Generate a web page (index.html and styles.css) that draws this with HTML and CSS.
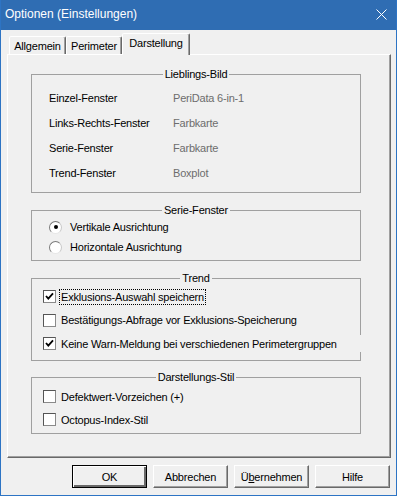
FILE: index.html
```html
<!DOCTYPE html>
<html lang="de">
<head>
<meta charset="utf-8">
<title>Optionen (Einstellungen)</title>
<link rel="stylesheet" href="styles.css">
</head>
<body>
<div class="window">
  <div class="titlebar">
    <span class="title">Optionen (Einstellungen)</span>
    <svg class="close" width="11" height="11" viewBox="0 0 11 11"><path d="M0.5 0.5 L10.5 10.5 M10.5 0.5 L0.5 10.5" stroke="#fff" stroke-width="1" fill="none"/></svg>
  </div>
  <div class="content">
    <div class="tabs">
      <div class="tab t1">Allgemein</div>
      <div class="tab t2">Perimeter</div>
      <div class="tab t3 active">Darstellung</div>
    </div>
    <div class="panel">
      <fieldset class="group g1">
        <legend>Lieblings-Bild</legend>
        <div class="fav">
          <span>Einzel-Fenster</span><span class="val">PeriData 6-in-1</span>
          <span>Links-Rechts-Fenster</span><span class="val">Farbkarte</span>
          <span>Serie-Fenster</span><span class="val">Farbkarte</span>
          <span>Trend-Fenster</span><span class="val">Boxplot</span>
        </div>
      </fieldset>
      <fieldset class="group g2">
        <legend>Serie-Fenster</legend>
        <div class="opts radios">
          <div class="row"><span class="rb on"></span><span class="lbl">Vertikale Ausrichtung</span></div>
          <div class="row"><span class="rb"></span><span class="lbl">Horizontale Ausrichtung</span></div>
        </div>
      </fieldset>
      <fieldset class="group g3">
        <legend>Trend</legend>
        <div class="opts checks trend">
          <div class="row"><span class="cb"><svg width="11" height="11" viewBox="0 0 11 11"><path d="M2 5 L4.3 7.6 L9 2.4" stroke="#000" stroke-width="1.8" fill="none"/></svg></span><span class="lbl focus">Exklusions-Auswahl speichern</span></div>
          <div class="row"><span class="cb"></span><span class="lbl">Bestätigungs-Abfrage vor Exklusions-Speicherung</span></div>
          <div class="row wide"><span class="cb"><svg width="11" height="11" viewBox="0 0 11 11"><path d="M2 5 L4.3 7.6 L9 2.4" stroke="#000" stroke-width="1.8" fill="none"/></svg></span><span class="lbl">Keine Warn-Meldung bei verschiedenen Perimetergruppen</span></div>
        </div>
      </fieldset>
      <fieldset class="group g4">
        <legend>Darstellungs-Stil</legend>
        <div class="opts checks style">
          <div class="row"><span class="cb"></span><span class="lbl">Defektwert-Vorzeichen (+)</span></div>
          <div class="row"><span class="cb"></span><span class="lbl">Octopus-Index-Stil</span></div>
        </div>
      </fieldset>
    </div>
    <div class="buttons">
      <button class="btn default">OK</button>
      <button class="btn">Abbrechen</button>
      <button class="btn">Ü<u>b</u>ernehmen</button>
      <button class="btn">Hilfe</button>
    </div>
  </div>
</div>
</body>
</html>
```
FILE: styles.css
```css
html, body {
  margin: 0;
  padding: 0;
  background: #f0f0f0;
}
body {
  font-family: "Liberation Sans", Arial, sans-serif;
  font-size: 11px;
  letter-spacing: -0.2px;
  color: #000;
}
.window {
  width: 397px;
  height: 496px;
  box-sizing: border-box;
  background: #f0f0f0;
  border: 1px solid #2d74c4;
  border-top: 0;
  display: flex;
  flex-direction: column;
}
.titlebar {
  height: 30px;
  flex: none;
  background: #2f6db3;
  color: #fff;
  display: flex;
  align-items: center;
  justify-content: space-between;
  padding: 0 9px 2px 4px;
  box-sizing: border-box;
}
.title {
  font-size: 12px;
  letter-spacing: 0;
}
.close {
  display: block;
}
.content {
  flex: 1;
  display: flex;
  flex-direction: column;
  padding: 3px 5px 0 6px;
}
.tabs {
  height: 21px;
  display: flex;
  align-items: flex-end;
  padding-left: 2px;
}
.tab {
  box-sizing: border-box;
  height: 18px;
  border: 1px solid;
  border-bottom: 0;
  border-color: #fff #696969 transparent #fff;
  border-radius: 2px 2px 0 0;
  box-shadow: inset -1px 0 0 #a0a0a0;
  text-align: center;
  padding-top: 3px;
  line-height: 13px;
  background: #f0f0f0;
}
.t1 { width: 57px; }
.t2 { width: 56px; }
.t3 { width: 68px; }
.tab.active {
  height: 22px;
  margin-bottom: -1px;
  position: relative;
  z-index: 1;
  padding-top: 3px;
}
.panel {
  height: 404px;
  box-sizing: border-box;
  border: 1px solid;
  border-color: #fff #696969 #696969 #fff;
  box-shadow: inset -1px -1px 0 #a0a0a0;
}
.group {
  box-sizing: border-box;
  width: 330px;
  margin: 0 0 0 23px;
  padding: 0;
  border: 1px solid #a0a0a0;
  min-inline-size: 0;
}
.group legend {
  margin: 0 auto;
  padding: 0 2px;
  line-height: 14px;
  height: 14px;
}
.g1 { margin-top: 12px; height: 126px; }
.g2 { margin-top: 10px; height: 58px; }
.g3 { margin-top: 10px; height: 90px; }
.g4 { margin-top: 9px; height: 64px; }

.fav {
  display: grid;
  grid-template-columns: 124px auto;
  grid-template-rows: 24px 25px 25px 25px;
  align-items: center;
  padding: 5px 0 0 17px;
  line-height: 14px;
}
.val {
  color: #6d6d6d;
}
.opts {
  display: flex;
  flex-direction: column;
}
.row {
  display: flex;
  align-items: center;
  line-height: 14px;
}
.radios {
  padding-left: 17px;
}
.radios .row {
  height: 20px;
}
.rb {
  box-sizing: border-box;
  width: 13px;
  height: 13px;
  border-radius: 50%;
  background: #fff;
  border: 1px solid;
  border-color: #7a7a7a #c8c8c8 #e6e6e6 #7a7a7a;
  margin-right: 8px;
  display: flex;
  align-items: center;
  justify-content: center;
}
.rb.on::after {
  content: "";
  width: 4px;
  height: 4px;
  border-radius: 50%;
  background: #000;
}
.checks {
  padding-left: 11px;
}
.trend .row { height: 24px; }
.trend .row:first-child { height: 23px; }
.style { padding-top: 1px; }
.style .row { height: 23px; }
.row.wide {
  height: 17px;
  margin: 3px 0 4px;
  width: 320px;
  background: #f0f0f0;
}
.cb {
  box-sizing: border-box;
  width: 13px;
  height: 13px;
  background: #fff;
  border: 1px solid;
  border-color: #555 #8a8a8a #8a8a8a #555;
  margin-right: 5px;
  display: flex;
  align-items: center;
  justify-content: center;
  flex: none;
}
.cb svg {
  display: block;
}
.lbl.focus {
  outline: 1px dotted #000;
  outline-offset: 0;
  padding: 0 1px;
  margin-left: -1px;
}
.buttons {
  display: flex;
  justify-content: flex-end;
  gap: 6px;
  margin-top: 7px;
  padding-right: 1px;
}
.btn {
  box-sizing: border-box;
  width: 75px;
  height: 23px;
  margin: 0;
  padding: 0;
  font-family: "Liberation Sans", Arial, sans-serif;
  font-size: 11px;
  letter-spacing: -0.2px;
  color: #000;
  background: #f0f0f0;
  border: 1px solid;
  border-color: #fff #696969 #696969 #fff;
  box-shadow: inset -1px -1px 0 #a0a0a0;
  border-radius: 0;
}
.btn.default {
  border: 1px solid #000;
  box-shadow: inset 1px 1px 0 #fff, inset -2px -2px 0 #696969, inset -1px -1px 0 #a0a0a0;
}
```
